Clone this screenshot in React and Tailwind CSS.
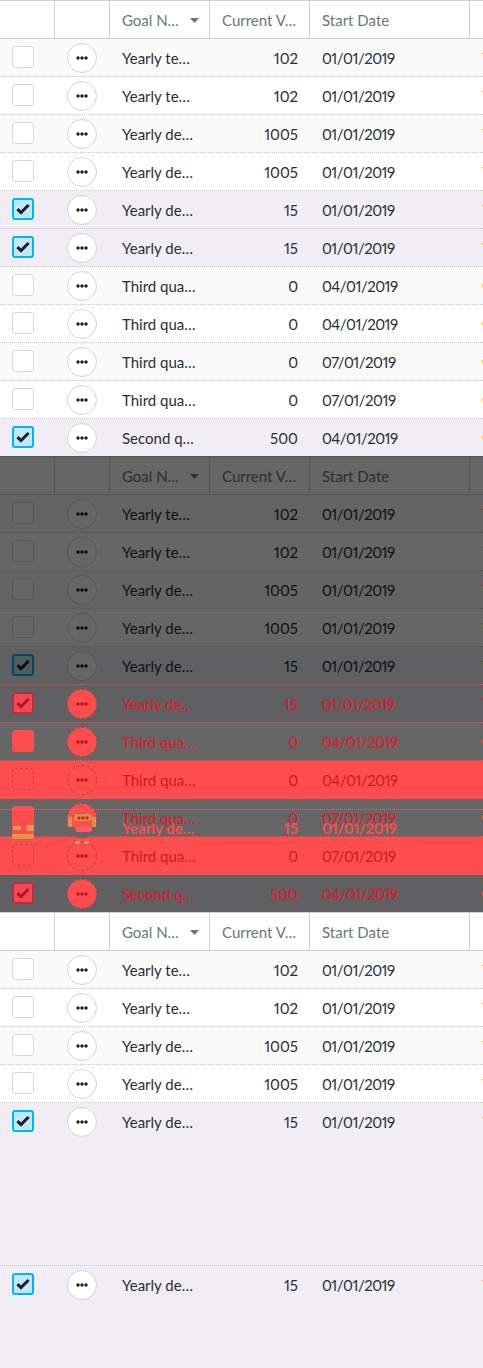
import React from 'react';

const goals = [
  { name: 'Yearly tenure goal', value: '102', date: '01/01/2019' },
  { name: 'Yearly tenure goal', value: '102', date: '01/01/2019' },
  { name: 'Yearly department goal', value: '1005', date: '01/01/2019' },
  { name: 'Yearly department goal', value: '1005', date: '01/01/2019' },
  { name: 'Yearly department goal', value: '15', date: '01/01/2019', checked: true },
  { name: 'Yearly department goal', value: '15', date: '01/01/2019', checked: true },
  { name: 'Third quarter goal', value: '0', date: '04/01/2019', status: true },
  { name: 'Third quarter goal', value: '0', date: '04/01/2019', status: true },
  { name: 'Third quarter goal', value: '0', date: '07/01/2019', status: true },
  { name: 'Third quarter goal', value: '0', date: '07/01/2019', status: true },
  { name: 'Second quarter goal', value: '500', date: '04/01/2019', status: true, checked: true },
];

function Dots() {
  return (
    <svg width="12" height="4" viewBox="0 0 12 4">
      <circle cx="2" cy="2" r="1.7" fill="currentColor" />
      <circle cx="6" cy="2" r="1.7" fill="currentColor" />
      <circle cx="10" cy="2" r="1.7" fill="currentColor" />
    </svg>
  );
}

function Check() {
  return (
    <svg width="14" height="12" viewBox="0 0 14 12">
      <path d="M1.4 6.2 5 9.6 12.6 2" fill="none" stroke="currentColor" strokeWidth="3" />
    </svg>
  );
}

function Header() {
  return (
    <div className="flex h-[39px] bg-white border-y border-[#cfcfcf] text-[15px] text-[#6a7681]">
      <div className="w-[55px] shrink-0 border-r border-[#cfcfcf]" />
      <div className="w-[55px] shrink-0 border-r border-[#cfcfcf]" />
      <div className="w-[100px] shrink-0 flex items-center pl-3 pt-px border-r border-[#cfcfcf]">
        <span className="w-[60px] truncate">Goal Name</span>
        <svg width="9" height="5" viewBox="0 0 9 5" className="ml-2"><path d="M0 0h9L4.5 5z" fill="#6a7681" /></svg>
      </div>
      <div className="w-[100px] shrink-0 flex items-center px-3 pt-px border-r border-[#cfcfcf]">
        <span className="truncate">Current Value</span>
      </div>
      <div className="w-[160px] shrink-0 flex items-center pl-3 pt-px border-r border-[#cfcfcf]">Start Date</div>
    </div>
  );
}

// tone: plain rows sit under the dark overlay, "red" and "fill" are the highlighted ones
function Row({ goal, index, tone = 'plain', last, topLine, height = 'h-[38px]' }) {
  const red = tone !== 'plain';
  const fill = tone === 'fill';
  let bg = goal.checked ? 'bg-[#f0edf5]' : index % 2 === 0 ? 'bg-[#fafafa]' : 'bg-white';
  if (tone === 'red') bg = goal.checked ? 'bg-[#606062]' : 'bg-[#666666]';
  if (fill) bg = 'bg-[#ff4c4c]';

  let box = 'border border-[#d8d8d8] bg-white';
  if (goal.checked) box = 'border-2 border-[#00b4f5] bg-[#bfe8fb] text-[#231f20]';
  if (red) box = goal.checked
    ? 'border-2 border-[#b5303f] bg-[#f04a55] text-[#c00f1c]'
    : 'border border-[#ff4c4c] bg-[#ff4c4c]';
  if (fill) box = 'border border-dashed border-[#b8484e] bg-[#ff4c4c]';

  const text = fill ? 'text-[#c81c26]' : red ? 'text-[#e6141e]' : 'text-[#2a2f36]';
  const circle = red
    ? 'border border-dashed border-[#7a5a5c] bg-[#ff4c4c] text-[#c00f1c]'
    : 'border border-[#d4d4d4] bg-white text-[#231f20]';
  const line = red ? 'border-[#ff4c4c]' : 'border-[#c8c8c8]';

  return (
    <div className={`flex ${height} ${bg} ${last ? '' : `border-b border-dotted ${line}`} ${topLine ? '-mt-px border-t border-dotted border-t-[#ff4c4c]' : ''} ${red ? 'relative z-10' : ''} text-[15px] ${text}`}>
      <div className="w-[55px] shrink-0 pl-3 pt-[7px]">
        <div className={`w-[22px] h-[22px] rounded-[3px] flex items-center justify-center ${box}`}>
          {goal.checked && <Check />}
        </div>
      </div>
      <div className="w-[55px] shrink-0 pl-3 pt-1">
        <div className={`w-[30px] h-[30px] rounded-full flex items-center justify-center ${circle}`}>
          <Dots />
        </div>
      </div>
      <div className="w-[100px] shrink-0 px-3 pt-[9px] leading-[20px] truncate">{goal.name}</div>
      <div className="w-[100px] shrink-0 pr-3 pt-[9px] leading-[20px] text-right">{goal.value}</div>
      <div className="w-[160px] shrink-0 pl-3 pt-[9px] leading-[20px] tracking-[-0.5px]">{goal.date}</div>
      <div className="flex-1 pl-3 pt-[9px] leading-[20px] overflow-hidden whitespace-nowrap">
        {goal.status
          ? <span className={`block w-3 h-[5px] mt-[7px] rounded-sm ${red ? 'bg-[#ff4c4c]' : 'bg-[#f9bc4f]'}`} />
          : <span className={red ? '' : 'text-[#c98a3a]'}>Y</span>}
      </div>
    </div>
  );
}

// the row being dragged, drawn over the row underneath it
function DraggedRow() {
  return (
    <div className="absolute left-0 right-0 top-[10px] h-[38px] z-20 flex text-[15px] font-bold text-[#ff4c4c] border-t border-dotted border-[#e8686c]">
      <div className="w-[55px] shrink-0 pl-3 pt-[6px]">
        <div className="relative w-[22px] h-[23px] rounded-[3px] bg-[#ff4c4c] border-b-[5px] border-[#d99a4a]">
          <span className="absolute left-[1px] top-[10px] w-2 h-1 bg-[#d99a4a]" />
          <span className="absolute right-0 top-[9px] w-[7px] h-[6px] bg-[#d99a4a]" />
        </div>
      </div>
      <div className="w-[55px] shrink-0 pl-3 pt-[3px]">
        <div className="relative w-[30px] h-[30px] rounded-full border border-dashed border-[#9a5054] flex justify-center">
          <span className="absolute left-[2px] right-[2px] top-[13px] h-[11px] rounded-b-2xl bg-[#666666]" />
          <span className="absolute left-[6px] top-0 w-[18px] h-[7px] rounded-sm bg-[#d9924a] flex items-center justify-center text-[#c0301c]"><Dots /></span>
          <span className="absolute left-0 top-[3px] w-1 h-[10px] bg-[#d9924a]" />
          <span className="absolute right-0 top-[3px] w-1 h-[10px] bg-[#d9924a]" />
          <span className="absolute left-[7px] top-[12px] w-[17px] h-[6px] rounded-sm bg-[#ff5c5c]" />
          <span className="absolute left-[7px] -bottom-[2px] w-[5px] h-[3px] bg-[#d9924a]" />
          <span className="absolute right-[7px] -bottom-[2px] w-[5px] h-[3px] bg-[#d9924a]" />
        </div>
      </div>
      <div className="w-[100px] shrink-0 px-3 pt-2 leading-[20px] truncate">Yearly department goal</div>
      <div className="w-[100px] shrink-0 pr-3 pt-2 leading-[20px] text-right">15</div>
      <div className="w-[160px] shrink-0 pl-3 pt-2 leading-[20px] tracking-[-0.5px]">01/01/2019</div>
    </div>
  );
}

export default function App() {
  const first = goals.slice(0, 5);

  return (
    <div className="w-[483px] h-[1368px] overflow-hidden bg-white proportional-nums font-['Lato',sans-serif]">
      <section>
        <Header />
        {goals.map((g, i) => (
          <Row key={i} goal={g} index={i} last={i === 10} height={i === 10 ? 'h-[37px]' : 'h-[38px]'} />
        ))}
      </section>

      <section className="relative">
        <div className="absolute inset-0 z-[5] bg-black/60" />
        <Header />
        {first.map((g, i) => <Row key={i} goal={g} index={i} />)}
        <Row goal={goals[5]} index={5} tone="red" topLine height="h-[39px]" />
        <Row goal={goals[6]} index={6} tone="red" />
        <Row goal={goals[7]} index={7} tone="fill" />
        <div className="relative z-20">
          <Row goal={goals[8]} index={8} tone="red" />
          <DraggedRow />
        </div>
        <Row goal={goals[9]} index={9} tone="fill" />
        <Row goal={goals[10]} index={10} tone="red" last height="h-[37px]" />
      </section>

      <section>
        <Header />
        {first.map((g, i) => (
          <Row key={i} goal={g} index={i} height={i === 4 ? 'h-[163px]' : 'h-[38px]'} />
        ))}
        <Row goal={goals[5]} index={5} last height="h-[102px]" />
      </section>
    </div>
  );
}
